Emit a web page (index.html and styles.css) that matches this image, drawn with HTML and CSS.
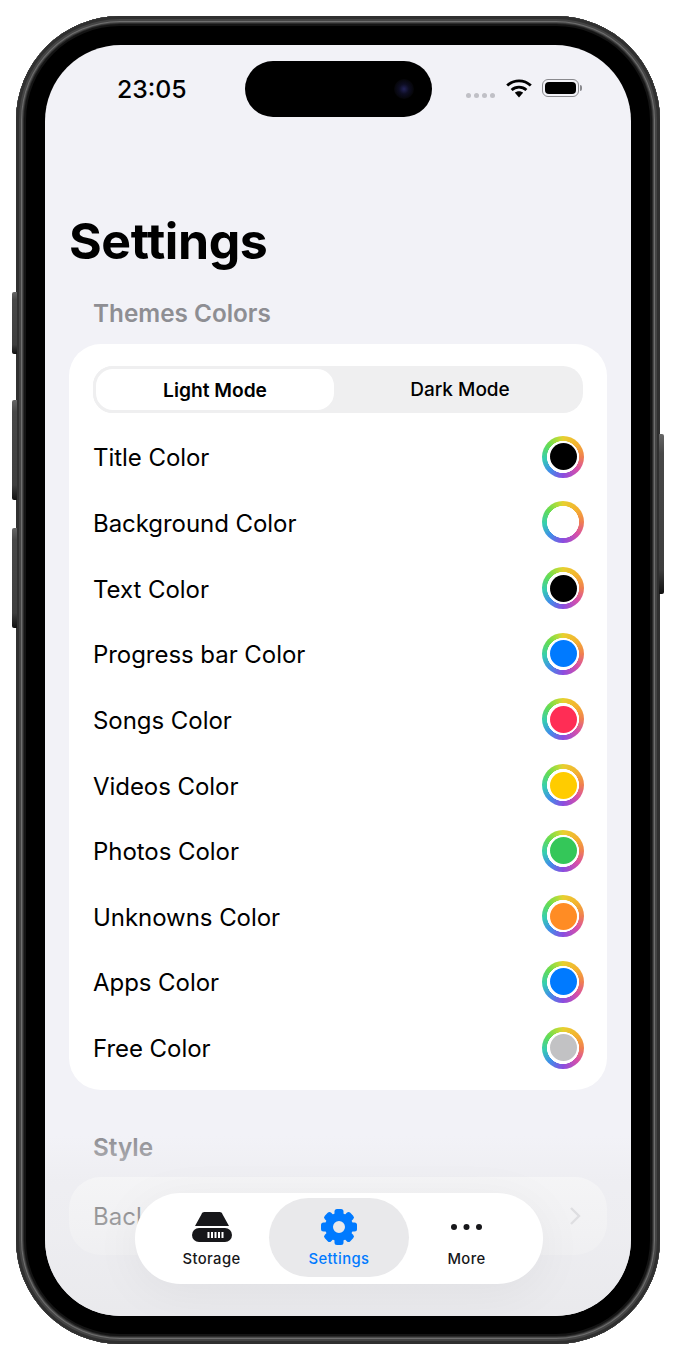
FILE: index.html
```html
<!DOCTYPE html>
<html lang="en">
<head>
<meta charset="utf-8">
<title>Settings</title>
<link rel="stylesheet" href="styles.css">
</head>
<body>
<div class="phone">
  <span class="btn btn-action"></span>
  <span class="btn btn-up"></span>
  <span class="btn btn-down"></span>
  <span class="btn btn-power"></span>
  <main class="screen">
    <header class="status">
      <div class="status-left"><span class="time">23:05</span></div>
      <div class="island"><span class="camera"></span></div>
      <div class="status-right">
        <span class="signal"><i></i><i></i><i></i><i></i></span>
        <svg class="wifi" viewBox="0 0 26 19" aria-hidden="true"><path d="M1.200 6.600a17 17 0 0 1 23.600 0" fill="none" stroke="#000" stroke-width="2.800"/><path d="M5.600 11a10.800 10.800 0 0 1 14.800 0" fill="none" stroke="#000" stroke-width="2.800"/><path d="M13 12.300c1.700 0 3 .5 4.100 1.500L13 18.600l-4.100-4.800c1.100-1 2.400-1.500 4.100-1.500z" fill="#000"/></svg>
        <span class="battery"><span class="battery-fill"></span></span>
      </div>
    </header>
    <h1 class="title">Settings</h1>
    <h2 class="section-label">Themes Colors</h2>
    <section class="card">
      <div class="segment">
        <span class="seg seg-on">Light Mode</span>
        <span class="seg">Dark Mode</span>
      </div>
      <ul class="rows">
        <li class="row"><span>Title Color</span><span class="swatch"><i class="dot c-black"></i></span></li>
        <li class="row"><span>Background Color</span><span class="swatch"><i class="dot c-white"></i></span></li>
        <li class="row"><span>Text Color</span><span class="swatch"><i class="dot c-black"></i></span></li>
        <li class="row"><span>Progress bar Color</span><span class="swatch"><i class="dot c-blue"></i></span></li>
        <li class="row"><span>Songs Color</span><span class="swatch"><i class="dot c-pink"></i></span></li>
        <li class="row"><span>Videos Color</span><span class="swatch"><i class="dot c-yellow"></i></span></li>
        <li class="row"><span>Photos Color</span><span class="swatch"><i class="dot c-green"></i></span></li>
        <li class="row"><span>Unknowns Color</span><span class="swatch"><i class="dot c-orange"></i></span></li>
        <li class="row"><span>Apps Color</span><span class="swatch"><i class="dot c-blue"></i></span></li>
        <li class="row"><span>Free Color</span><span class="swatch"><i class="dot c-gray"></i></span></li>
      </ul>
    </section>
    <h2 class="section-label style-label">Style</h2>
    <section class="back-card">
      <span>Background</span>
      <svg class="chevron" viewBox="0 0 12 20" aria-hidden="true"><path d="M2 2l8 8-8 8" fill="none" stroke="#c6c6c9" stroke-width="2.400"/></svg>
    </section>
    <div class="fade"></div>
    <nav class="tabbar">
      <div class="tab tab-first">
        <svg class="tab-icon drive" viewBox="0 0 40 30" aria-hidden="true">
          <path d="M9.500 2.200C9.900.8 11 0 12.400 0h15.200c1.400 0 2.500.8 2.900 2.200L37 14H3z" fill="#17171a"/>
          <rect x="0" y="16" width="40" height="14" rx="7" fill="#17171a"/>
          <g fill="#fff"><rect x="15.500" y="20" width="2" height="6"/><rect x="19" y="20" width="2" height="6"/><rect x="22.500" y="20" width="2" height="6"/><rect x="26" y="20" width="2" height="6"/><rect x="29.500" y="20" width="2" height="6"/></g>
        </svg>
        <span class="tab-label">Storage</span>
      </div>
      <div class="tab tab-on">
        <svg class="tab-icon gear" viewBox="0 0 36 36" aria-hidden="true">
          <g fill="#007aff">
            <rect x="13.500" y="0" width="9" height="8" rx="2.500"/>
            <rect x="13.500" y="0" width="9" height="8" rx="2.500" transform="rotate(45 18 18)"/>
            <rect x="13.500" y="0" width="9" height="8" rx="2.500" transform="rotate(90 18 18)"/>
            <rect x="13.500" y="0" width="9" height="8" rx="2.500" transform="rotate(135 18 18)"/>
            <rect x="13.500" y="0" width="9" height="8" rx="2.500" transform="rotate(180 18 18)"/>
            <rect x="13.500" y="0" width="9" height="8" rx="2.500" transform="rotate(225 18 18)"/>
            <rect x="13.500" y="0" width="9" height="8" rx="2.500" transform="rotate(270 18 18)"/>
            <rect x="13.500" y="0" width="9" height="8" rx="2.500" transform="rotate(315 18 18)"/>
          </g>
          <circle cx="18" cy="18" r="10" fill="none" stroke="#007aff" stroke-width="8"/>
        </svg>
        <span class="tab-label">Settings</span>
      </div>
      <div class="tab tab-last">
        <svg class="tab-icon more" viewBox="0 0 31 6" aria-hidden="true"><circle cx="3" cy="3" r="3" fill="#17171a"/><circle cx="15.500" cy="3" r="3" fill="#17171a"/><circle cx="28" cy="3" r="3" fill="#17171a"/></svg>
        <span class="tab-label">More</span>
      </div>
    </nav>
  </main>
</div>
</body>
</html>
```
FILE: styles.css
```css
* { box-sizing: border-box; }
html, body { margin: 0; padding: 0; background: #fff; }
body {
  width: 676px;
  height: 1360px;
  padding: 16px;
  overflow: hidden;
  font-family: Inter, "Liberation Sans", sans-serif;
  color: #000;
}
.phone {
  position: relative;
  width: 644px;
  height: 1328px;
  padding: 29px;
  border-radius: 104px;
  background: #000;
  box-shadow:
    inset 0 0 0 3px #303030,
    inset 0 0 0 5px #454545,
    inset 0 0 0 6px #6e6e6e,
    inset 0 0 0 7px #4a4a4a,
    inset 0 0 0 8px #2c2c2c,
    inset 0 0 0 10px #141414;
}
.btn {
  position: absolute;
  width: 5px;
  background: linear-gradient(to bottom, #666 0, #484848 12%, #3e3e3e 85%, #111 100%);
  border-radius: 2px 0 0 2px;
}
.btn-action { left: -4px; top: 276px; height: 62px; }
.btn-up { left: -4px; top: 384px; height: 100px; }
.btn-down { left: -4px; top: 512px; height: 100px; }
.btn-power {
  right: -4px;
  top: 418px;
  height: 160px;
  border-radius: 0 2px 2px 0;
}
.screen {
  position: relative;
  width: 586px;
  height: 1271px;
  border-radius: 76px;
  background: #f2f2f7;
  overflow: hidden;
}
.status {
  display: flex;
  height: 72px;
  padding-top: 16px;
}
.status-left {
  width: 200px;
  height: 56px;
  padding-left: 72px;
  display: flex;
  align-items: center;
}
.time {
  font-size: 24.800px;
  font-weight: 550;
  line-height: 1;
}
.island {
  position: relative;
  width: 187px;
  height: 56px;
  border-radius: 28px;
  background: #000;
}
.camera {
  position: absolute;
  right: 18px;
  top: 18px;
  width: 20px;
  height: 20px;
  border-radius: 50%;
  background: radial-gradient(circle, #232358 0, #0d0d22 35%, #050508 70%, #000 100%);
}
.status-right {
  display: flex;
  align-items: flex-start;
  padding-left: 34px;
}
.signal {
  display: flex;
  gap: 3px;
  margin-top: 32px;
  width: 40px;
}
.signal i {
  width: 5px;
  height: 5px;
  border-radius: 50%;
  background: #c0c0c6;
}
.wifi {
  width: 26px;
  height: 19px;
  margin-top: 18px;
}
.battery {
  position: relative;
  width: 37px;
  height: 18px;
  margin-top: 18px;
  margin-left: 10px;
  padding: 2px;
  border: 1px solid #8a8a8e;
  border-radius: 6px;
}
.battery::after {
  content: "";
  position: absolute;
  right: -4px;
  top: 5px;
  width: 2px;
  height: 6px;
  border-radius: 0 2px 2px 0;
  background: #8a8a8e;
}
.battery-fill {
  display: block;
  height: 100%;
  border-radius: 4px;
  background: #000;
}
.title {
  margin: 94px 0 0 24px;
  font-size: 50px;
  line-height: 60px;
  font-weight: 700;
  letter-spacing: -0.4px;
}
.section-label {
  margin: 27px 0 0 48px;
  font-size: 24.300px;
  line-height: 30px;
  font-weight: 600;
  color: #8e8e93;
}
.card {
  margin: 16px 24px 0;
  padding: 22px 24px 10px;
  height: 746px;
  border-radius: 32px;
  background: #fff;
}
.segment {
  display: flex;
  height: 47px;
  border-radius: 20px;
  background: #efeff0;
}
.seg {
  flex: 1;
  display: flex;
  align-items: center;
  justify-content: center;
  font-size: 19px;
  font-weight: 500;
}
.seg-on {
  flex: 0 0 244px;
  font-size: 19.200px;
  font-weight: 600;
  background: #fff;
  border-radius: 20px;
  border: 3px solid #efeff0;
}
.rows {
  list-style: none;
  margin: 12px 0 0;
  padding: 0;
}
.row {
  display: flex;
  align-items: center;
  justify-content: space-between;
  height: 65.650px;
  font-size: 24px;
  letter-spacing: -0.05px;
}
.swatch {
  width: 42px;
  height: 42px;
  margin: 0 -1px 2px 0;
  padding: 7.500px;
  border-radius: 50%;
  background:
    radial-gradient(circle, #fff 0, #fff 15.800px, transparent 16.300px),
    conic-gradient(#e8d030 0deg, #f4b030 50deg, #f07f50 90deg, #d84fa8 130deg, #8a4de0 180deg, #3f8fe8 225deg, #36cfb0 265deg, #66dc50 310deg, #b8dc38 345deg, #e8d030 360deg);
}
.dot {
  display: block;
  width: 27px;
  height: 27px;
  border-radius: 50%;
}
.c-black { background: #000; }
.c-white { background: #fff; }
.c-blue { background: #007aff; }
.c-pink { background: #ff2d55; }
.c-yellow { background: #ffcc00; }
.c-green { background: #34c759; }
.c-orange { background: #ff8c24; }
.c-gray { background: #c2c2c4; }
.style-label {
  margin-top: 42px;
}
.back-card {
  display: flex;
  align-items: center;
  justify-content: space-between;
  height: 78px;
  margin: 15px 24px 0;
  padding: 0 24px;
  border-radius: 32px;
  background: #fff;
  font-size: 24px;
  color: #000;
}
.chevron {
  width: 12px;
  height: 20px;
  margin-right: 2px;
}
.fade {
  position: absolute;
  left: 0;
  right: 0;
  bottom: 0;
  height: 180px;
  background: linear-gradient(to bottom, rgba(235, 235, 238, 0) 0, rgba(235, 235, 238, 0.55) 25%, rgba(235, 235, 238, 0.7) 55%, rgba(233, 233, 236, 0.95) 100%);
  pointer-events: none;
}
.tabbar {
  position: absolute;
  left: 90px;
  top: 1148px;
  width: 408px;
  height: 91px;
  padding: 5px 5px 7px 5px;
  display: flex;
  justify-content: center;
  border-radius: 46px;
  background: #fff;
  box-shadow: 0 8px 50px rgba(0, 0, 0, 0.05);
}
.tab {
  flex: 1;
  display: flex;
  flex-direction: column;
  align-items: center;
  justify-content: flex-end;
  border-radius: 40px;
  padding-bottom: 9px;
  color: #17171a;
}
.tab-first { padding-left: 14px; }
.tab-last { padding-right: 14px; }
.tab-on {
  flex: 0 0 140px;
  background: #e9e9eb;
  color: #007aff;
}
.tab-icon { display: block; }
.drive { width: 40px; height: 30px; margin-bottom: 8px; }
.gear { width: 36px; height: 36px; margin-bottom: 5px; }
.more { width: 31px; height: 6px; margin-bottom: 20px; }
.tab-label {
  font-size: 14.800px;
  line-height: 18px;
  font-weight: 500;
  letter-spacing: 0.4px;
}
```
